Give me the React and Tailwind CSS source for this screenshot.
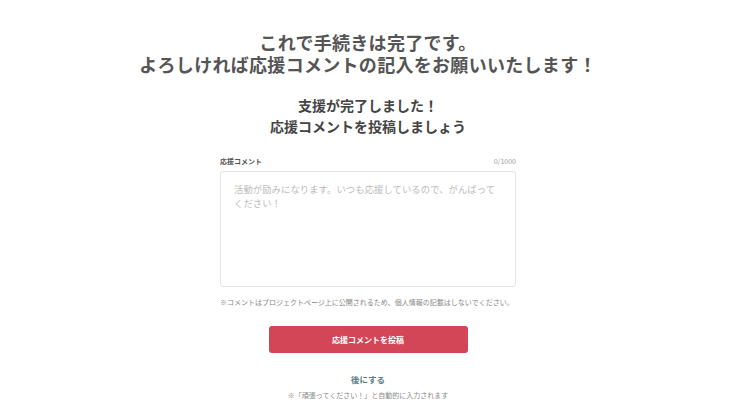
export default function App() {
  const font = { fontFamily: '"Noto Sans CJK JP", "Noto Sans", sans-serif' };
  return (
    <div className="w-[736px] h-[414px] bg-white overflow-hidden flex flex-col items-center pt-[31px]" style={font}>
      <h1 className="text-[18px] leading-[22px] font-bold text-[#555] text-center tracking-[0.3px]">
        <div>これで手続きは完了です。</div>
        <div>よろしければ応援コメントの記入をお願いいたします！</div>
      </h1>
      <h2 className="mt-[20px] text-[14px] leading-[21px] font-bold text-[#444] text-center">
        <div>支援が完了しました！</div>
        <div>応援コメントを投稿しましょう</div>
      </h2>
      <div className="mt-[19px] w-[296px] flex flex-col">
        <div className="flex justify-between items-center text-[7px] leading-[10px] text-[#555]">
          <span className="font-bold">応援コメント</span>
          <span className="text-[#999]">0/1000</span>
        </div>
        <textarea
          className="mt-[5px] h-[116px] w-full resize-none rounded-[3px] border border-[#e3e3e3] px-[13px] pt-[10px] text-[9.3px] leading-[14px] tracking-[0.1px] text-[#333] placeholder:text-[#bbb] outline-none"
          style={font}
          placeholder={"活動が励みになります。いつも応援しているので、がんばって\nください！"}
        />
        <p className="mt-[10px] text-[7px] leading-[10px] text-[#888] whitespace-nowrap">
          ※コメントはプロジェクトページ上に公開されるため、個人情報の記載はしないでください。
        </p>
      </div>
      <button
        className="mt-[19px] w-[199px] h-[27px] rounded-[3px] bg-[#d24657] text-white text-[8px] font-bold flex items-center justify-center"
        style={font}
      >
        応援コメントを投稿
      </button>
      <div className="mt-[20px] text-[8.5px] leading-[12px] font-bold text-[#5b7b82]">後にする</div>
      <div className="mt-[5px] text-[7px] leading-[10px] text-[#888]">
        ※「頑張ってください！」と自動的に入力されます
      </div>
    </div>
  );
}
